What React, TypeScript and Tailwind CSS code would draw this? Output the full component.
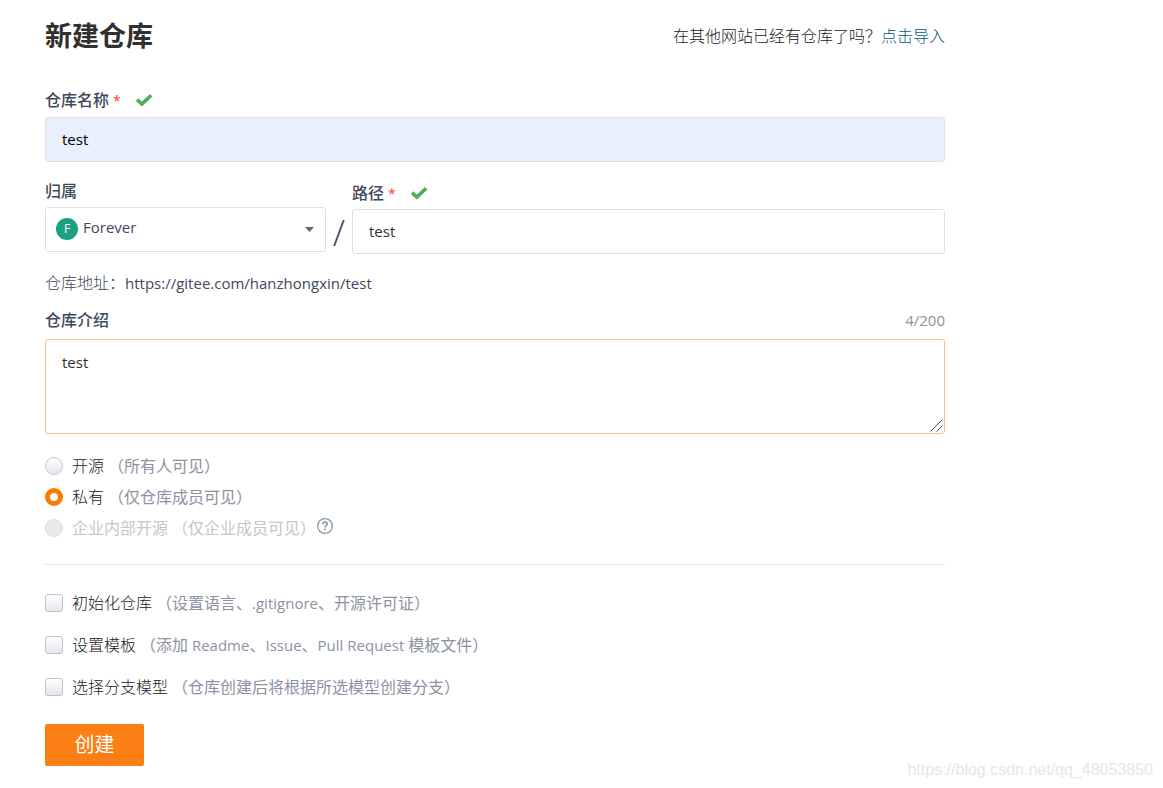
import React, { useState } from 'react';

interface Choice {
  id: string;
  label: string;
  hint: string;
  disabled?: boolean;
}

const visibilityOptions: Choice[] = [
  { id: 'public', label: '开源', hint: '（所有人可见）' },
  { id: 'private', label: '私有', hint: '（仅仓库成员可见）' },
  { id: 'internal', label: '企业内部开源', hint: '（仅企业成员可见）', disabled: true },
];

const setupOptions: Choice[] = [
  { id: 'init', label: '初始化仓库', hint: '（设置语言、.gitignore、开源许可证）' },
  { id: 'template', label: '设置模板', hint: '（添加 Readme、Issue、Pull Request 模板文件）' },
  { id: 'branch', label: '选择分支模型', hint: '（仓库创建后将根据所选模型创建分支）' },
];

const CheckMark = () => (
  <svg className="ml-3.5 h-4 w-[18px]" viewBox="0 0 18 16" fill="none" aria-hidden="true">
    <path d="M2 7.6 L6.9 12 L16.2 3.2" stroke="#4caf50" strokeWidth="3.6" />
  </svg>
);

const HelpIcon = () => (
  <svg className="h-[18px] w-[18px]" viewBox="0 0 18 18" fill="none" aria-hidden="true">
    <circle cx="9" cy="9" r="7.4" stroke="#8794a6" strokeWidth="1.3" />
    <path
      d="M6.7 7.3 C6.7 5.8 7.7 5 9 5 C10.3 5 11.3 5.8 11.3 7 C11.3 8.4 9 8.6 9 10.4"
      stroke="#8794a6"
      strokeWidth="1.5"
    />
    <rect x="8.2" y="11.6" width="1.6" height="1.6" fill="#8794a6" />
  </svg>
);

const Required = () => <span className="ml-1 text-sm leading-none font-normal text-[#f5453b]">*</span>;

// Latin runs are set one pixel smaller than the Chinese text around them
const Hint = ({ text }: { text: string }) => (
  <>
    {text.split(/([\x20-\x7e]+)/).map((part, i) =>
      i % 2 ? <span key={i} className="text-[15px]">{part}</span> : part
    )}
  </>
);

const App = () => {
  const [name, setName] = useState('test');
  const [path, setPath] = useState('test');
  const [description, setDescription] = useState('test');
  const [visibility, setVisibility] = useState('private');

  return (
    <div
      lang="zh-CN"
      className="relative min-h-screen bg-white px-[45px] pt-4 pb-[22px] font-['Open_Sans','Noto_Sans_CJK_SC',sans-serif] text-base leading-6 font-light text-[#40485b]"
    >
      <form className="max-w-[900px]" onSubmit={(e) => e.preventDefault()}>
        <header className="mb-8 flex items-center justify-between">
          <h1 className="text-[27px] leading-10 font-bold text-[#303030]">新建仓库</h1>
          <p className="text-[#202020]">
            在其他网站已经有仓库了吗？
            <a href="#import" className="text-[#005980]">点击导入</a>
          </p>
        </header>

        <div className="mb-[5px] flex h-6 items-center">
          <label htmlFor="name" className="font-medium">
            仓库名称
            <Required />
          </label>
          <CheckMark />
        </div>
        <input
          id="name"
          value={name}
          onChange={(e) => setName(e.target.value)}
          className="block h-[45px] w-full rounded-[3px] border border-[#dce3e8] bg-[#e8f0fe] px-4 pb-0.5 text-[15px] font-normal text-black outline-none"
        />

        <div className="mt-[17px] flex">
          <div className="w-[281px]">
            <label htmlFor="owner" className="mb-1 block font-medium">归属</label>
            <div className="relative">
              <select
                id="owner"
                className="block h-[45px] w-full appearance-none rounded-[3px] border border-[#dce0e6] bg-white pr-8 pb-1.5 pl-[37px] text-[15px] font-normal text-[#40485b] outline-none"
              >
                <option>Forever</option>
              </select>
              <span className="pointer-events-none absolute top-[11px] left-[11px] flex h-[22px] w-[22px] items-center justify-center rounded-full bg-[#1aa084] text-xs font-normal text-white">
                F
              </span>
              <svg
                className="pointer-events-none absolute top-5 right-3 h-[5px] w-[9px]"
                viewBox="0 0 9 5"
                aria-hidden="true"
              >
                <path d="M0 0 H9 L4.5 5 Z" fill="#60687b" />
              </svg>
            </div>
          </div>
          <span className="w-[26px] pt-9 text-center text-4xl leading-9">/</span>
          <div className="flex-1 pt-0.5">
            <div className="mb-1 flex h-6 items-center">
              <label htmlFor="path" className="font-medium">
                路径
                <Required />
              </label>
              <CheckMark />
            </div>
            <input
              id="path"
              value={path}
              onChange={(e) => setPath(e.target.value)}
              className="block h-[45px] w-full rounded-[3px] border border-[#dce0e6] bg-white px-4 pb-0.5 text-[15px] font-normal text-[#303030] outline-none"
            />
          </div>
        </div>

        <p className="mt-[17px]">
          仓库地址：<span className="text-[15px] font-normal">https://gitee.com/hanzhongxin/test</span>
        </p>

        <div className="mt-[13px] mb-[7px] flex justify-between">
          <label htmlFor="description" className="font-medium">仓库介绍</label>
          <span className="text-[15px] font-normal text-[#8c92a4]">{description.length}/200</span>
        </div>
        <div className="relative">
          <textarea
            id="description"
            value={description}
            maxLength={200}
            onChange={(e) => setDescription(e.target.value)}
            className="block h-[95px] w-full resize-none rounded-[3px] border border-[#ffbb80] bg-white px-4 py-2.5 text-[15px] leading-6 font-normal text-[#303030] outline-none"
          />
          <svg
            className="pointer-events-none absolute right-0.5 bottom-0.5 h-[13px] w-[13px]"
            viewBox="0 0 13 13"
            stroke="#505050"
            aria-hidden="true"
          >
            <path d="M0.5 12.5 L12.5 0.5 M6.5 12.5 L12.5 6.5" />
          </svg>
        </div>

        <fieldset className="mt-4 border-b border-[#e0e0e0] pb-[21px]">
          {visibilityOptions.map((option) => (
            <div key={option.id} className="flex h-[31px] items-center">
              <input
                type="radio"
                id={option.id}
                name="visibility"
                disabled={option.disabled}
                checked={visibility === option.id}
                onChange={() => setVisibility(option.id)}
                className="h-[18px] w-[18px] appearance-none rounded-full border border-[#c6c8ce] bg-linear-to-b from-white to-[#e3e6ed] checked:border-[5px] checked:border-[#ff7800] checked:bg-white checked:bg-none disabled:border-[#dedede] disabled:bg-[#e9e9e9] disabled:bg-none"
              />
              <label
                htmlFor={option.id}
                className={option.disabled ? 'ml-[9px] font-normal text-[#c6c6c6]' : 'ml-[9px] text-[#202020]'}
              >
                {option.label}
                <span className={option.disabled ? 'ml-1' : 'ml-1 font-normal text-[#8c92a4]'}>
                  <Hint text={option.hint} />
                </span>
              </label>
              {option.disabled && (
                <button type="button" aria-label="帮助" className="mb-1">
                  <HelpIcon />
                </button>
              )}
            </div>
          ))}
        </fieldset>

        <div className="mt-[26px] flex flex-col gap-[18px]">
          {setupOptions.map((option) => (
            <div key={option.id} className="flex h-6 items-center">
              <input
                type="checkbox"
                id={option.id}
                className="h-[18px] w-[18px] appearance-none rounded-[3px] border border-[#c0c2ca] bg-linear-to-b from-white to-[#e3e6ed] checked:border-[#ff7800] checked:bg-[#ff7800] checked:bg-none"
              />
              <label htmlFor={option.id} className="ml-[9px] text-[#202020]">
                {option.label}
                <span className="ml-1 font-normal text-[#8c92a4]">
                  <Hint text={option.hint} />
                </span>
              </label>
            </div>
          ))}
        </div>

        <button
          type="submit"
          className="mt-[25px] h-[42px] w-[99px] rounded-xs bg-[#fb7f14] text-xl font-normal text-white"
        >
          创建
        </button>
      </form>

      <span className="absolute right-2.5 bottom-1.5 font-['Liberation_Sans',sans-serif] text-base font-normal text-[#e6e6e6]">
        https://blog.csdn.net/qq_48053850
      </span>
    </div>
  );
};

export default App;
